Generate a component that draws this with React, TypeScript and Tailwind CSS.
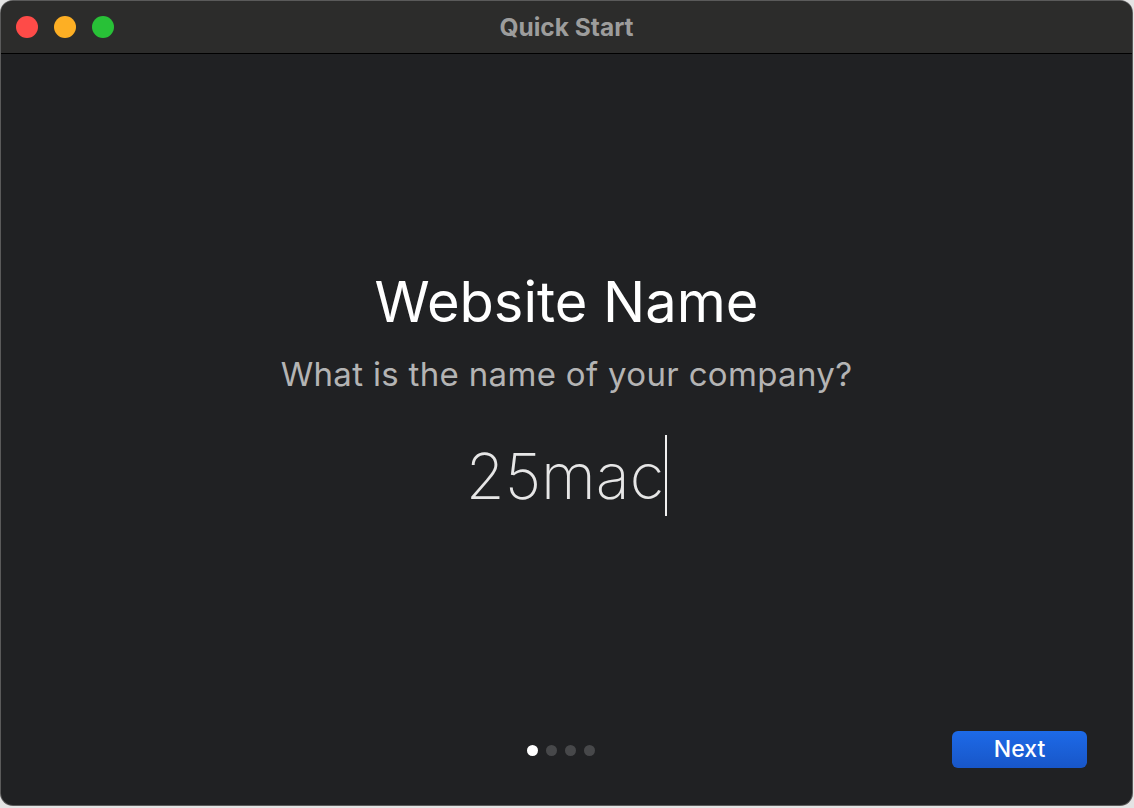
import React, { useState } from "react";

export default function App() {
  const [name] = useState("25mac");
  const [step] = useState(0);
  const steps = [0, 1, 2, 3];

  return (
    <div className="h-[808px] w-[1134px] bg-[#e4e4e4] pt-px pl-px pr-[2px] pb-[3px]">
      <div className="flex h-full w-full flex-col overflow-hidden rounded-[12px] bg-[#202123] shadow-[0_0_0_1px_#5a5a5a]">
        {/* title bar */}
        <div className="relative flex h-[53px] shrink-0 items-center border-b border-black bg-[#2c2c2b] px-[15px]">
          <div className="flex gap-[16px]">
            <span className="h-[22px] w-[22px] rounded-full bg-[#fe4b48]" />
            <span className="h-[22px] w-[22px] rounded-full bg-[#fdaf24]" />
            <span className="h-[22px] w-[22px] rounded-full bg-[#28c137]" />
          </div>
          <div className="absolute inset-0 flex items-center justify-center font-['Inter',sans-serif] text-[24.5px] font-bold text-[#9d9d9c]">
            Quick Start
          </div>
        </div>

        {/* content */}
        <div className="flex flex-1 flex-col items-center pt-[214px] font-['Inter',sans-serif]">
          <h1 className="text-[56px] leading-[68px] font-normal text-white">Website Name</h1>
          <p className="mt-[18px] text-[33px] leading-[40px] tracking-[0.01em] text-[#b4b4b4]">
            What is the name of your company?
          </p>
          <div className="mt-[42px] flex items-start">
            <span className="text-[63px] leading-[80px] font-extralight text-[#e6e6e6]">{name}</span>
            <span className="ml-[1px] -mt-px h-[81px] w-[2px] bg-[#f0f0f0]" />
          </div>
        </div>

        {/* footer */}
        <div className="relative flex h-[74px] shrink-0 items-start justify-center pt-[3px]">
          <div className="mr-[12px] mt-[11px] flex gap-[8px]">
            {steps.map((s) => (
              <span key={s} className={s === step ? "h-[11px] w-[11px] rounded-full bg-white" : "h-[11px] w-[11px] rounded-full bg-[#47484a]"} />
            ))}
          </div>
          <button className="absolute right-[45px] top-0 h-[37px] w-[135px] rounded-[6px] bg-gradient-to-b from-[#1d6ae8] to-[#1856c8] font-['Inter',sans-serif] text-[23px] font-medium text-white">
            Next
          </button>
        </div>
      </div>
    </div>
  );
}
